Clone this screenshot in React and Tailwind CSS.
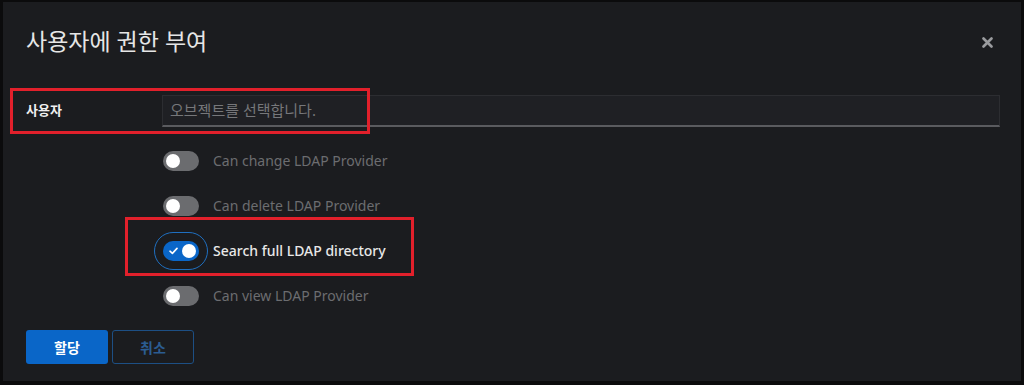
import React from "react";

const font = { fontFamily: '"Noto Sans", "Noto Sans CJK KR", sans-serif' };

function Toggle({ on }) {
  if (on) {
    return (
      <div className="relative w-[36px] h-[20px] shrink-0">
        <div className="absolute -left-[9px] -top-[9px] w-[54px] h-[38px] rounded-full border-[1.5px] border-[#1f6fc0]"></div>
        <div className="w-[36px] h-[20px] rounded-full bg-[#0a66c8] flex items-center justify-between pl-[6px] pr-[3px]">
          <svg width="9" height="8" viewBox="0 0 9 8" fill="none">
            <path d="M1 4.2 L3.4 6.4 L8 1.4" stroke="white" strokeWidth="1.6" strokeLinecap="round" strokeLinejoin="round" />
          </svg>
          <div className="w-[14px] h-[14px] rounded-full bg-white"></div>
        </div>
      </div>
    );
  }
  return (
    <div className="w-[36px] h-[20px] rounded-full bg-[#6b6c6f] flex items-center pl-[3px] shrink-0">
      <div className="w-[14px] h-[14px] rounded-full bg-white"></div>
    </div>
  );
}

function Row({ label, on }) {
  return (
    <div className="h-[45px] flex items-center gap-[14px]">
      <Toggle on={on} />
      <span className={on ? "text-[14px] text-[#e8e8e8] font-medium" : "text-[14px] text-[#6c6d70]"}>{label}</span>
    </div>
  );
}

export default function App() {
  return (
    <div className="w-[1024px] h-[385px] bg-[#0b0b0c] pt-[2px] pb-[4px] px-[3px]" style={font}>
      <div className="relative h-full bg-[#1b1c1f] flex flex-col pl-[23px] pr-[21px]">
        <div className="flex items-center justify-between pt-[19px] h-[58px]">
          <h1 className="text-[23px] leading-[32px] text-[#e6e6e6]">사용자에 권한 부여</h1>
          <svg width="11" height="11" viewBox="0 0 11 11" className="mr-[7px] mt-[4px]">
            <path d="M1.5 1.5 L9.5 9.5 M9.5 1.5 L1.5 9.5" stroke="#9a9b9e" strokeWidth="2.6" strokeLinecap="round" />
          </svg>
        </div>
        <div className="flex items-center mt-[35px]">
          <div className="w-[136px] text-[13px] font-bold text-[#f0f0f0]">사용자</div>
          <div className="flex-1 h-[32px] bg-[#1f2024] border border-[#2c2d31] border-b-2 border-b-[#5a5b5f] flex items-center pl-[7px]">
            <span className="text-[15px] text-[#76777a]">오브젝트를 선택합니다.</span>
          </div>
        </div>
        <div className="flex flex-col ml-[137px] mt-[11px]">
          <Row label="Can change LDAP Provider" />
          <Row label="Can delete LDAP Provider" />
          <Row label="Search full LDAP directory" on />
          <Row label="Can view LDAP Provider" />
        </div>
        <div className="flex gap-[4px] mt-[12px]">
          <button className="w-[82px] h-[34px] rounded-[3px] bg-[#0a66c8] text-white text-[14px] font-bold">할당</button>
          <button className="w-[82px] h-[34px] rounded-[3px] border border-[#1d4f84] text-[#2b5c92] text-[14px] font-bold">취소</button>
        </div>

        <div className="absolute left-[7px] top-[86px] w-[360px] h-[46px] border-[3px] border-[#e2202b]"></div>
        <div className="absolute left-[122px] top-[215px] w-[289px] h-[59px] border-[3px] border-[#e2202b]"></div>
      </div>
    </div>
  );
}
